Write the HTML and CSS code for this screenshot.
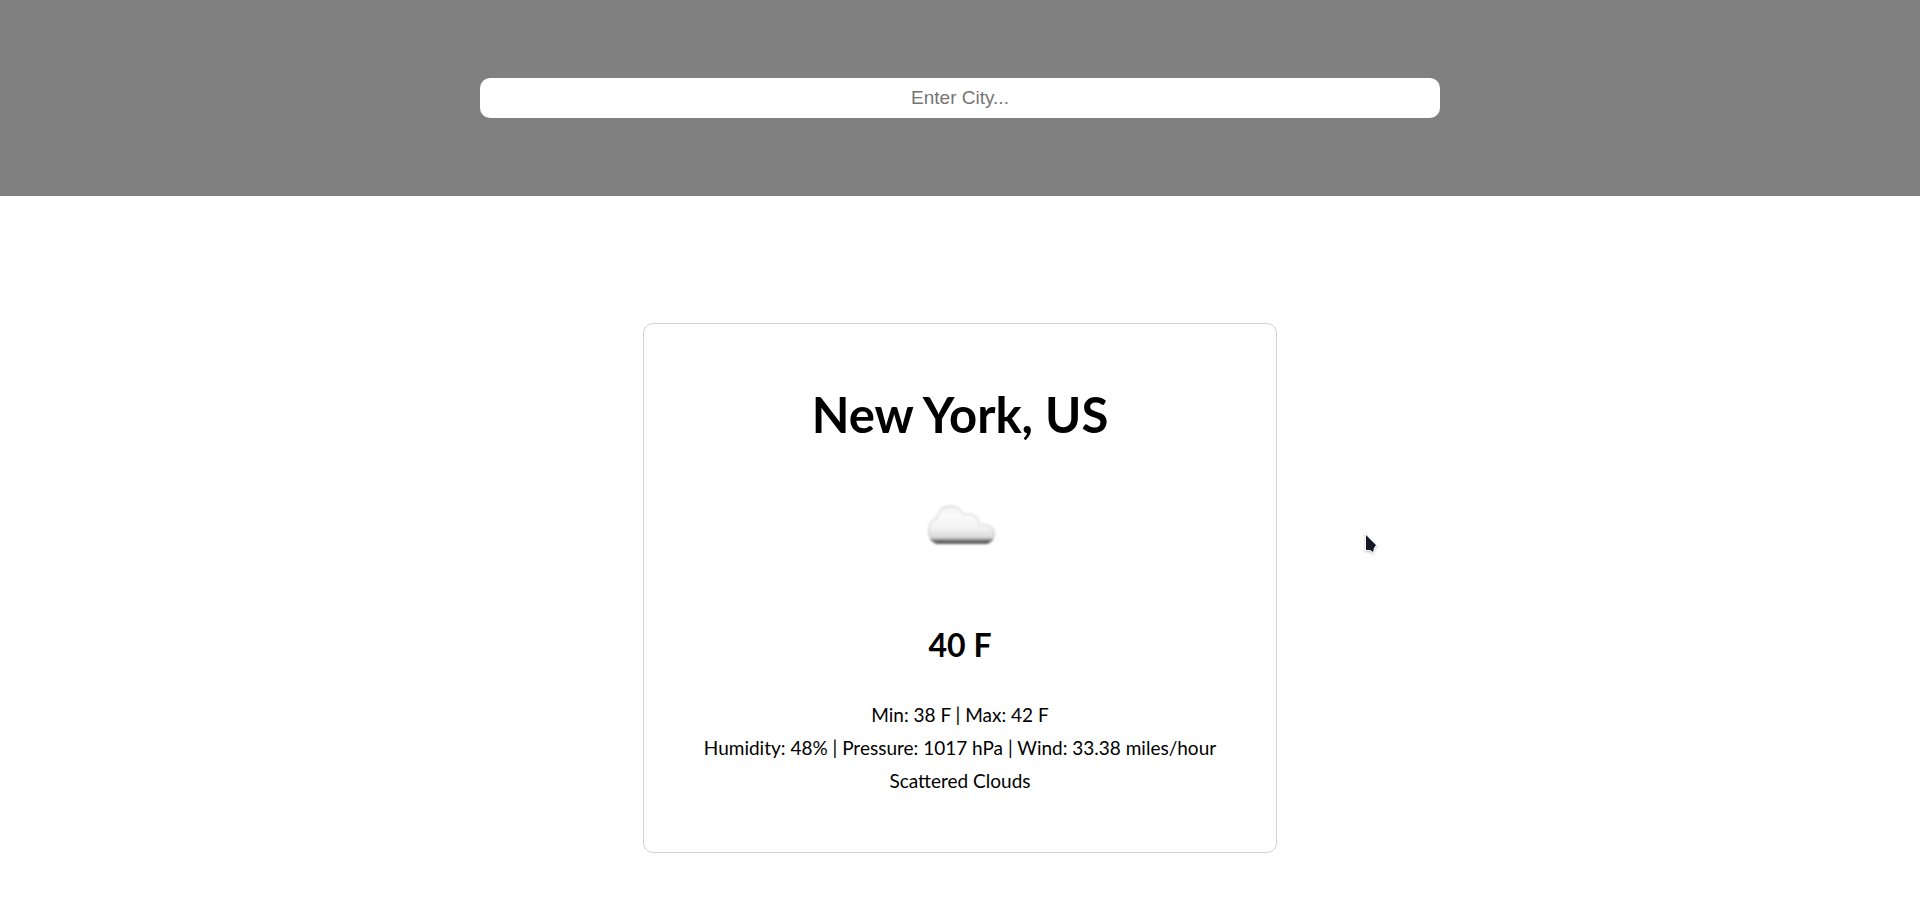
FILE: index.html
```html
<!DOCTYPE html>
<html lang="en">
<head>
<meta charset="utf-8">
<meta name="viewport" content="width=device-width, initial-scale=1">
<title>Weather</title>
<link rel="stylesheet" href="styles.css">
</head>
<body>
<header class="search">
  <input class="search-input" type="text" placeholder="Enter City..." aria-label="City">
</header>
<main class="content">
  <section class="card">
    <h1 class="city">New York, US</h1>
    <svg class="weather-icon" viewBox="0 0 100 100" role="img" aria-label="Scattered clouds">
      <defs>
        <linearGradient id="cloud" gradientUnits="userSpaceOnUse" x1="0" y1="29" x2="0" y2="68">
          <stop offset="0" stop-color="#efefef"/>
          <stop offset="0.25" stop-color="#fafafa"/>
          <stop offset="0.6" stop-color="#f2f2f2"/>
          <stop offset="0.84" stop-color="#d8d8d8"/>
          <stop offset="0.89" stop-color="#8c8c8c"/>
          <stop offset="0.95" stop-color="#5a5a5a"/>
          <stop offset="1" stop-color="#606060"/>
        </linearGradient>
        <filter id="soft" x="-10%" y="-10%" width="120%" height="120%">
          <feGaussianBlur stdDeviation="0.8"/>
        </filter>
        <filter id="edge" x="-10%" y="-10%" width="120%" height="120%">
          <feGaussianBlur stdDeviation="1.3"/>
        </filter>
      </defs>
      <path d="M27 68C20 66 17 60 18 54C19 48 22 44 27 42C28 34 34 30 40 30C47 30 51 33 54 39C61 36 67 40 69 46L70 49C78 47 85 52 85 58C85 63 82 66 77 68Z" fill="url(#cloud)" filter="url(#soft)"/>
      <path d="M20 60C17 52 20 44 27 42C28 34 34 30 40 30C47 30 51 33 54 39C61 36 67 40 69 46L70 49C78 47 85 52 84 60" fill="none" stroke="#cfcfcf" stroke-opacity="0.5" stroke-width="2" filter="url(#edge)"/>
    </svg>
    <h2 class="temperature">40 F</h2>
    <div class="details">
      <p>Min: 38 F | Max: 42 F</p>
      <p>Humidity: 48% | Pressure: 1017 hPa | Wind: 33.38 miles/hour</p>
      <p>Scattered Clouds</p>
    </div>
  </section>
</main>
<svg class="pointer" viewBox="0 0 20 26" aria-hidden="true">
  <path d="M5 5V20H9L12 22L13 18L15 15Z" fill="#161829" stroke="#fff" stroke-width="2" paint-order="stroke"/>
</svg>
</body>
</html>
```
FILE: styles.css
```css
* {
  box-sizing: border-box;
}

body {
  margin: 0;
  background: #fff;
  color: #000;
  font-family: Lato, "Noto Sans", sans-serif;
}

.search {
  display: flex;
  justify-content: center;
  padding: 78px 0;
  background: #808080;
}

.search-input {
  width: 50%;
  height: 40px;
  padding: 0 10px;
  border: 0;
  border-radius: 10px;
  background: #fff;
  font-family: "Liberation Sans", Arial, sans-serif;
  font-size: 19px;
  text-align: center;
}

.search-input::placeholder {
  color: #757575;
}

.content {
  display: flex;
  justify-content: center;
  padding: 127px 0 53px;
}

.card {
  display: flex;
  flex-direction: column;
  align-items: center;
  width: 33%;
  min-width: 600px;
  padding: 58px 20px 55px;
  border: 1px solid #d3d3d3;
  border-radius: 10px;
  background: #fff;
  text-align: center;
}

.city {
  margin: 0;
  font-size: 49px;
  line-height: 64px;
}

.weather-icon {
  width: 100px;
  height: 100px;
  margin-top: 30px;
}

.temperature {
  margin: 47px 0 0;
  font-size: 32px;
  line-height: 44px;
}

.details {
  margin-top: 31px;
  font-size: 19px;
  line-height: 33px;
}

.details p {
  margin: 0;
}

.pointer {
  position: absolute;
  top: 530px;
  left: 1361px;
  width: 20px;
  height: 26px;
  filter: drop-shadow(0 1px 1px rgba(0, 0, 0, 0.25));
  pointer-events: none;
}
```
